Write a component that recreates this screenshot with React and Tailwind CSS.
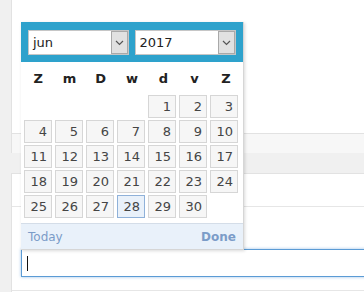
import React from "react";

const dayNames = ["Z", "m", "D", "w", "d", "v", "Z"];

// 1 june 2017 falls on a thursday; the week starts on sunday (Z)
const cells = [
  ...Array(4).fill(null),
  ...Array.from({ length: 30 }, (_, i) => i + 1),
];

const Chevron = () => (
  <svg width="9" height="6" viewBox="0 0 9 6" className="text-[#555]">
    <path d="M1 1 L4.5 4.5 L8 1" fill="none" stroke="currentColor" strokeWidth="1.2" />
  </svg>
);

const Select = ({ value, width }) => (
  <div
    className={`flex h-[25px] items-stretch border border-[#c6c6c6] bg-white ${width}`}
  >
    <div className="flex flex-1 items-center pl-[4px] text-[13px] text-[#222]">{value}</div>
    <div className="flex w-[17px] items-center justify-center border border-[#a9a9a9] bg-[#e1e1e1]">
      <Chevron />
    </div>
  </div>
);

const App = () => {
  const today = 28;

  return (
    <div
      className="relative h-[292px] w-[364px] overflow-hidden bg-[#f0f0f0]"
      style={{ fontFamily: '"DejaVu Sans", Verdana, sans-serif' }}
    >
      {/* page behind the picker */}
      <div className="ml-[11px] flex h-[153px] flex-col border-l border-[#e2e2e2] bg-white">
        <div className="flex-1" />
        <div className="h-[20px] border-t border-[#e2e2e2] bg-[#f7f7f7]" />
      </div>
      <div className="ml-[11px] mt-[20px] flex h-[119px] flex-col border-l border-t border-[#e2e2e2] bg-white">
        <div className="h-[33px] border-b border-[#e6e6e6]" />
        <div className="h-[42px]" />
        <div className="-mr-[10px] ml-[9px] flex h-[28px] items-center border border-[#5b9bd5] bg-white pl-[5px] shadow-[0_0_3px_rgba(91,155,213,0.6)]">
          <div className="h-[15px] w-px bg-[#111]" />
        </div>
        <div className="mt-[13px] border-b border-[#e6e6e6]" />
      </div>

      {/* date picker */}
      <div className="absolute left-[21px] top-[22px] w-[223px] border-r border-b border-[#d6d6d6] bg-white shadow-[1px_1px_3px_rgba(0,0,0,0.15)]">
        <div className="flex h-[40px] items-start gap-[6px] bg-[#2ea2cc] px-[7px] pt-[8px]">
          <Select value="jun" width="w-[101px]" />
          <Select value="2017" width="w-[102px]" />
        </div>

        <div className="grid h-[33px] grid-cols-7 gap-x-[3px] px-[3px] text-[13px] font-bold text-[#222]">
          {dayNames.map((d, i) => (
            <div key={i} className="flex items-center justify-center">
              {d}
            </div>
          ))}
        </div>

        <div className="grid grid-cols-[repeat(7,28px)] gap-x-[3px] gap-y-[2px] px-[3px]">
          {cells.map((n, i) =>
            n === null ? (
              <div key={i} className="h-[23px]" />
            ) : (
              <div
                key={i}
                className={`flex h-[23px] items-center justify-end border pr-[4px] text-[13px] ${
                  n === today
                    ? "border-[#8fb1d9] bg-[#e9f1fa] text-[#454545]"
                    : "border-[#d6d6d6] bg-[#f6f6f6] text-[#454545]"
                }`}
              >
                {n}
              </div>
            )
          )}
        </div>

        <div className="mt-[5px] flex h-[26px] items-center justify-between border-t border-[#d4dde8] bg-[#e9f1fa] px-[7px] text-[12px] text-[#7b9cc8]">
          <span>Today</span>
          <span className="font-bold">Done</span>
        </div>
      </div>
    </div>
  );
};

export default App;
